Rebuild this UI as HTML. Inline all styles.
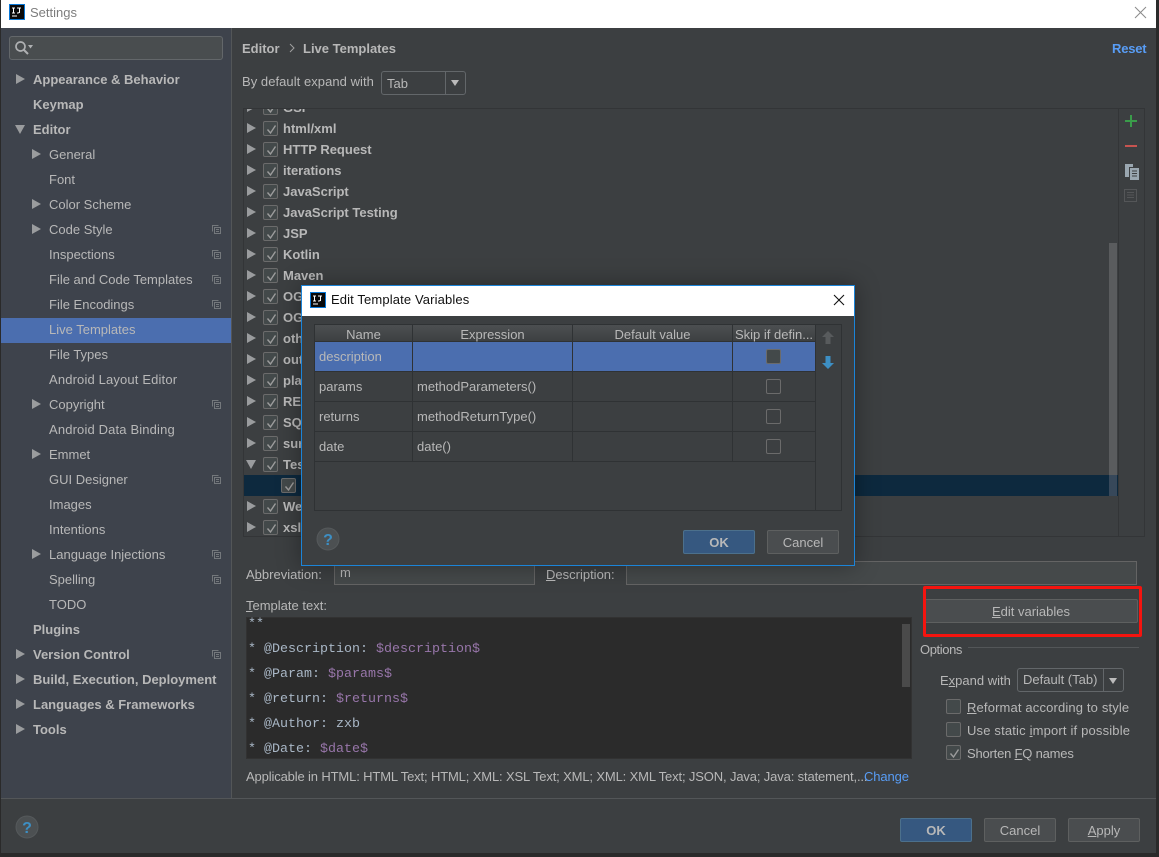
<!DOCTYPE html>
<html><head><meta charset="utf-8"><title>Settings</title>
<style>
html,body{margin:0;padding:0;background:#2b2b2b;}
#w{position:relative;width:1159px;height:857px;overflow:hidden;background:#2a2a2a;font-family:"Liberation Sans","Noto Sans CJK SC",sans-serif;font-size:13px;color:#b8b8b8;}
.a{position:absolute;box-sizing:border-box;}
.t{position:absolute;white-space:nowrap;line-height:22px;height:22px;}
.b{font-weight:bold;}
.btn{position:absolute;box-sizing:border-box;height:24px;border:1px solid #5e6060;border-radius:2px;background:#4a4d4f;text-align:center;line-height:24px;color:#b8b8b8;}
.ok{background:#365880;border-color:#4c708c;font-weight:bold;color:#b8b8b8;}
.cb{position:absolute;box-sizing:border-box;width:15px;height:15px;border:1px solid #6b6b6b;border-radius:2px;background:#43494a;}
.cb svg{position:absolute;left:1px;top:1px;}
.ar{position:absolute;width:0;height:0;border-left:9px solid #9a9c9e;border-top:5px solid transparent;border-bottom:5px solid transparent;}
.dn{position:absolute;width:0;height:0;border-top:9px solid #9a9c9e;border-left:5px solid transparent;border-right:5px solid transparent;}
.cp{position:absolute;left:212px;}
.tree{font-weight:bold;color:#b8b8b8;}
.ln{position:absolute;left:248px;font-family:"Liberation Mono",monospace;font-size:13.33px;line-height:20px;white-space:pre;color:#a9b7c6;}
.ln i{font-style:normal;color:#9876aa;}
.c{position:absolute;background:#2f3234;}
.cell{position:absolute;white-space:nowrap;line-height:20px;}
</style></head><body>
<div id="w">
<svg width="0" height="0" style="position:absolute"><defs>
<symbol id="chk" viewBox="0 0 13 13"><path d="M2.5 6.5 L5.5 10 L10.5 2.5" fill="none" stroke="#9c9c9c" stroke-width="1.4"/></symbol>
<symbol id="cpy" viewBox="0 0 9 9"><path d="M.5 6.5V.5H6.5M2.5 2.5H8.5V8.5H2.5ZM4 4.5H7M4 6.5H7" fill="none" stroke="#74787c" stroke-width="1"/></symbol>
</defs></svg>

<!-- window -->
<div class="a" style="left:1px;top:0;width:1155px;height:853px;background:#3c3f41;"></div>
<div class="a" style="left:1px;top:0;width:1155px;height:28px;background:#fff;"></div>
<svg class="a" style="left:9px;top:4px" width="16" height="16"><rect width="16" height="16" fill="#0a78d7"/><rect x="1" y="1" width="14" height="14" fill="#0a0a0a"/><path d="M3 4H6M4.500 4V9M3 9H6M8 4H12M10.500 4V8.500L9 9H8M3 12H8" stroke="#fff" stroke-width="1" fill="none"/></svg>
<div class="t" style="left:30px;top:2px;color:#7d7d7d;font-size:13px;">Settings</div>
<svg class="a" style="left:1134px;top:6px" width="13" height="13"><path d="M1 1L12 12M12 1L1 12" stroke="#8b8b8b" stroke-width="1"/></svg>

<!-- sidebar -->
<div class="a" style="left:1px;top:28px;width:230px;height:770px;background:#3e434c;"></div>
<div class="a" style="left:231px;top:28px;width:1px;height:770px;background:#535658;"></div>
<div class="a" style="left:9px;top:36px;width:214px;height:24px;background:#494d4f;border:1px solid #63676a;border-radius:3px;"></div>
<svg class="a" style="left:15px;top:41px" width="20" height="14"><circle cx="5.500" cy="5.500" r="4.500" fill="none" stroke="#aeb0b2" stroke-width="1.700"/><path d="M8.500 8.500L13 13" stroke="#aeb0b2" stroke-width="2"/><path d="M13 4H18L15.500 7.500Z" fill="#aeb0b2"/></svg>
<div class="a" style="left:1px;top:318px;width:230px;height:25px;background:#4b6eaf;"></div>

<div class="ar" style="left:16px;top:74px"></div>
<div class="dn" style="left:15px;top:125px"></div>
<div class="ar" style="left:32px;top:149px"></div>
<div class="ar" style="left:32px;top:199px"></div>
<div class="ar" style="left:32px;top:224px"></div>
<div class="ar" style="left:32px;top:399px"></div>
<div class="ar" style="left:32px;top:449px"></div>
<div class="ar" style="left:32px;top:549px"></div>
<div class="ar" style="left:16px;top:649px"></div>
<div class="ar" style="left:16px;top:674px"></div>
<div class="ar" style="left:16px;top:699px"></div>
<div class="ar" style="left:16px;top:724px"></div>

<div class="t b" style="left:33px;top:69px">Appearance &amp; Behavior</div>
<div class="t b" style="left:33px;top:94px">Keymap</div>
<div class="t b" style="left:33px;top:119px">Editor</div>
<div class="t" style="left:49px;top:144px">General</div>
<div class="t" style="left:49px;top:169px">Font</div>
<div class="t" style="left:49px;top:194px">Color Scheme</div>
<div class="t" style="left:49px;top:219px">Code Style</div>
<div class="t" style="left:49px;top:244px">Inspections</div>
<div class="t" style="left:49px;top:269px">File and Code Templates</div>
<div class="t" style="left:49px;top:294px">File Encodings</div>
<div class="t" style="left:49px;top:319px">Live Templates</div>
<div class="t" style="left:49px;top:344px">File Types</div>
<div class="t" style="left:49px;top:369px;letter-spacing:.15px">Android Layout Editor</div>
<div class="t" style="left:49px;top:394px">Copyright</div>
<div class="t" style="left:49px;top:419px;letter-spacing:.15px">Android Data Binding</div>
<div class="t" style="left:49px;top:444px">Emmet</div>
<div class="t" style="left:49px;top:469px">GUI Designer</div>
<div class="t" style="left:49px;top:494px">Images</div>
<div class="t" style="left:49px;top:519px">Intentions</div>
<div class="t" style="left:49px;top:544px">Language Injections</div>
<div class="t" style="left:49px;top:569px">Spelling</div>
<div class="t" style="left:49px;top:594px">TODO</div>
<div class="t b" style="left:33px;top:619px">Plugins</div>
<div class="t b" style="left:33px;top:644px">Version Control</div>
<div class="t b" style="left:33px;top:669px">Build, Execution, Deployment</div>
<div class="t b" style="left:33px;top:694px">Languages &amp; Frameworks</div>
<div class="t b" style="left:33px;top:719px">Tools</div>

<svg class="cp" style="top:225px" width="9" height="9"><use href="#cpy"/></svg>
<svg class="cp" style="top:250px" width="9" height="9"><use href="#cpy"/></svg>
<svg class="cp" style="top:275px" width="9" height="9"><use href="#cpy"/></svg>
<svg class="cp" style="top:300px" width="9" height="9"><use href="#cpy"/></svg>
<svg class="cp" style="top:400px" width="9" height="9"><use href="#cpy"/></svg>
<svg class="cp" style="top:475px" width="9" height="9"><use href="#cpy"/></svg>
<svg class="cp" style="top:550px" width="9" height="9"><use href="#cpy"/></svg>
<svg class="cp" style="top:575px" width="9" height="9"><use href="#cpy"/></svg>
<svg class="cp" style="top:650px" width="9" height="9"><use href="#cpy"/></svg>

<!-- header -->
<div class="t b" style="left:242px;top:38px">Editor</div>
<svg class="a" style="left:289px;top:43px" width="6" height="10"><path d="M1 1L5 5L1 9" fill="none" stroke="#a0a0a0"/></svg>
<div class="t b" style="left:303px;top:38px">Live Templates</div>
<div class="t b" style="left:1112px;top:38px;color:#589df6;letter-spacing:-.2px">Reset</div>
<div class="t" style="left:242px;top:71px;letter-spacing:.05px">By default expand with</div>
<div class="a" style="left:381px;top:71px;width:85px;height:24px;border:1px solid #63676a;border-radius:3px;"></div>
<div class="a" style="left:445px;top:72px;width:1px;height:22px;background:#63676a;"></div>
<div class="t" style="left:387px;top:73px">Tab</div>
<div class="a" style="left:451px;top:80px;width:0;height:0;border-top:6px solid #bbb;border-left:4px solid transparent;border-right:4px solid transparent;"></div>

<!-- tree -->
<div class="a" style="left:243px;top:108px;width:902px;height:429px;border:1px solid #333537;"></div>
<div class="a" style="left:1118px;top:108px;width:1px;height:428px;background:#333537;"></div>
<div class="a" style="left:244px;top:475px;width:874px;height:21px;background:#0d293e;"></div>
<div class="a" style="left:1109px;top:243px;width:8px;height:232px;background:#5a5c5e;"></div>
<div class="a" style="left:1109px;top:475px;width:8px;height:21px;background:#37485a;"></div>

<div class="a" style="left:244px;top:109px;width:870px;height:427px;overflow:hidden;">
<div class="ar" style="left:3px;top:-7px"></div><div class="cb" style="left:19px;top:-9px"><svg width="13" height="13"><use href="#chk"/></svg></div><div class="t tree" style="left:39px;top:-12px">GSP</div>
<div class="ar" style="left:3px;top:14px"></div><div class="cb" style="left:19px;top:12px"><svg width="13" height="13"><use href="#chk"/></svg></div><div class="t tree" style="left:39px;top:9px">html/xml</div>
<div class="ar" style="left:3px;top:35px"></div><div class="cb" style="left:19px;top:33px"><svg width="13" height="13"><use href="#chk"/></svg></div><div class="t tree" style="left:39px;top:30px">HTTP Request</div>
<div class="ar" style="left:3px;top:56px"></div><div class="cb" style="left:19px;top:54px"><svg width="13" height="13"><use href="#chk"/></svg></div><div class="t tree" style="left:39px;top:51px">iterations</div>
<div class="ar" style="left:3px;top:77px"></div><div class="cb" style="left:19px;top:75px"><svg width="13" height="13"><use href="#chk"/></svg></div><div class="t tree" style="left:39px;top:72px">JavaScript</div>
<div class="ar" style="left:3px;top:98px"></div><div class="cb" style="left:19px;top:96px"><svg width="13" height="13"><use href="#chk"/></svg></div><div class="t tree" style="left:39px;top:93px">JavaScript Testing</div>
<div class="ar" style="left:3px;top:119px"></div><div class="cb" style="left:19px;top:117px"><svg width="13" height="13"><use href="#chk"/></svg></div><div class="t tree" style="left:39px;top:114px">JSP</div>
<div class="ar" style="left:3px;top:140px"></div><div class="cb" style="left:19px;top:138px"><svg width="13" height="13"><use href="#chk"/></svg></div><div class="t tree" style="left:39px;top:135px">Kotlin</div>
<div class="ar" style="left:3px;top:161px"></div><div class="cb" style="left:19px;top:159px"><svg width="13" height="13"><use href="#chk"/></svg></div><div class="t tree" style="left:39px;top:156px">Maven</div>
<div class="ar" style="left:3px;top:182px"></div><div class="cb" style="left:19px;top:180px"><svg width="13" height="13"><use href="#chk"/></svg></div><div class="t tree" style="left:39px;top:177px">OGNL</div>
<div class="ar" style="left:3px;top:203px"></div><div class="cb" style="left:19px;top:201px"><svg width="13" height="13"><use href="#chk"/></svg></div><div class="t tree" style="left:39px;top:198px">OGNL</div>
<div class="ar" style="left:3px;top:224px"></div><div class="cb" style="left:19px;top:222px"><svg width="13" height="13"><use href="#chk"/></svg></div><div class="t tree" style="left:39px;top:219px">other</div>
<div class="ar" style="left:3px;top:245px"></div><div class="cb" style="left:19px;top:243px"><svg width="13" height="13"><use href="#chk"/></svg></div><div class="t tree" style="left:39px;top:240px">output</div>
<div class="ar" style="left:3px;top:266px"></div><div class="cb" style="left:19px;top:264px"><svg width="13" height="13"><use href="#chk"/></svg></div><div class="t tree" style="left:39px;top:261px">plain</div>
<div class="ar" style="left:3px;top:287px"></div><div class="cb" style="left:19px;top:285px"><svg width="13" height="13"><use href="#chk"/></svg></div><div class="t tree" style="left:39px;top:282px">REST</div>
<div class="ar" style="left:3px;top:308px"></div><div class="cb" style="left:19px;top:306px"><svg width="13" height="13"><use href="#chk"/></svg></div><div class="t tree" style="left:39px;top:303px">SQL</div>
<div class="ar" style="left:3px;top:329px"></div><div class="cb" style="left:19px;top:327px"><svg width="13" height="13"><use href="#chk"/></svg></div><div class="t tree" style="left:39px;top:324px">surround</div>
<div class="dn" style="left:2px;top:351px"></div><div class="cb" style="left:19px;top:348px"><svg width="13" height="13"><use href="#chk"/></svg></div><div class="t tree" style="left:39px;top:345px">Test</div>
<div class="cb" style="left:37px;top:369px"><svg width="13" height="13"><use href="#chk"/></svg></div>
<div class="ar" style="left:3px;top:392px"></div><div class="cb" style="left:19px;top:390px"><svg width="13" height="13"><use href="#chk"/></svg></div><div class="t tree" style="left:39px;top:387px">Web</div>
<div class="ar" style="left:3px;top:413px"></div><div class="cb" style="left:19px;top:411px"><svg width="13" height="13"><use href="#chk"/></svg></div><div class="t tree" style="left:39px;top:408px">xsl</div>
</div>

<svg class="a" style="left:1124px;top:114px" width="14" height="14"><path d="M7 1V13M1 7H13" stroke="#3a9c4a" stroke-width="2"/></svg>
<div class="a" style="left:1125px;top:145px;width:12px;height:2px;background:#c75450;"></div>
<svg class="a" style="left:1124px;top:163px" width="16" height="18"><path d="M1 1H9V4H5V14H1Z" fill="#9aa7b0"/><rect x="6" y="5" width="9" height="12" fill="#9aa7b0"/><path d="M8 8H13M8 10.500H13M8 13H13" stroke="#3c3f41"/></svg>
<svg class="a" style="left:1124px;top:189px" width="14" height="15"><rect x=".5" y=".5" width="12" height="12" fill="none" stroke="#545658"/><path d="M3 3.500H10M3 6H10M3 8.500H10" stroke="#545658"/></svg>

<!-- abbreviation -->
<div class="t" style="left:246px;top:564px">A<u>b</u>breviation:</div>
<div class="a" style="left:334px;top:558px;width:201px;height:27px;background:#45494a;border:1px solid #646464;border-top:0;"></div>
<div class="t" style="left:340px;top:562px">m</div>
<div class="t" style="left:546px;top:564px"><u>D</u>escription:</div>
<div class="a" style="left:626px;top:561px;width:511px;height:24px;background:#45494a;border:1px solid #646464;"></div>
<div class="t" style="left:246px;top:595px"><u>T</u>emplate text:</div>

<!-- editor -->
<div class="a" style="left:246px;top:617px;width:666px;height:142px;background:#2b2b2b;border:1px solid #323232;"></div>
<div class="a" style="left:902px;top:624px;width:8px;height:63px;background:#4a4a4a;"></div>
<div class="ln" style="top:615px">**</div>
<div class="ln" style="top:640px">* @Description: <i>$description$</i></div>
<div class="ln" style="top:665px">* @Param: <i>$params$</i></div>
<div class="ln" style="top:690px">* @return: <i>$returns$</i></div>
<div class="ln" style="top:715px">* @Author: zxb</div>
<div class="ln" style="top:740px">* @Date: <i>$date$</i></div>
<div class="t" style="left:246px;top:766px;letter-spacing:-.14px">Applicable in HTML: HTML Text; HTML; XML: XSL Text; XML; XML: XML Text; JSON, Java; Java: statement,...</div>
<div class="t" style="left:864px;top:766px;color:#589df6;letter-spacing:-.1px">Change</div>

<!-- edit variables -->
<div class="btn" style="left:924px;top:599px;width:214px;"><u>E</u>dit variables</div>
<div class="a" style="left:923px;top:586px;width:219px;height:51px;border:3px solid #f5140f;border-radius:2px;"></div>

<!-- options -->
<div class="t" style="left:920px;top:639px;letter-spacing:-.4px">Options</div>
<div class="a" style="left:968px;top:647px;width:171px;height:1px;background:#535658;"></div>
<div class="t" style="left:940px;top:670px">E<u>x</u>pand with</div>
<div class="a" style="left:1017px;top:668px;width:107px;height:24px;border:1px solid #63676a;border-radius:3px;"></div>
<div class="a" style="left:1103px;top:669px;width:1px;height:22px;background:#63676a;"></div>
<div class="t" style="left:1023px;top:669px">Default (Tab)</div>
<div class="a" style="left:1109px;top:678px;width:0;height:0;border-top:6px solid #bbb;border-left:4px solid transparent;border-right:4px solid transparent;"></div>
<div class="cb" style="left:946px;top:699px"></div>
<div class="t" style="left:967px;top:697px;letter-spacing:.15px"><u>R</u>eformat according to style</div>
<div class="cb" style="left:946px;top:722px"></div>
<div class="t" style="left:967px;top:720px;letter-spacing:.17px">Use static <u>i</u>mport if possible</div>
<div class="cb" style="left:946px;top:745px"><svg width="13" height="13"><use href="#chk"/></svg></div>
<div class="t" style="left:967px;top:743px;letter-spacing:-.2px">Shorten <u>F</u>Q names</div>

<!-- bottom -->
<div class="a" style="left:1px;top:798px;width:1155px;height:1px;background:#535658;"></div>
<svg class="a" style="left:15px;top:815px" width="24" height="24"><circle cx="12" cy="12" r="11" fill="#4c5052" stroke="#55595b"/><text x="12" y="18" text-anchor="middle" font-family="Liberation Sans" font-weight="bold" font-size="16" fill="#3d8fc4">?</text></svg>
<div class="btn ok" style="left:900px;top:818px;width:72px;">OK</div>
<div class="btn" style="left:984px;top:818px;width:72px;">Cancel</div>
<div class="btn" style="left:1068px;top:818px;width:72px;"><u>A</u>pply</div>

<!-- dialog -->
<div class="a" style="left:301px;top:285px;width:554px;height:281px;background:#3c3f41;border:1px solid #1b84d8;box-shadow:0 0 22px rgba(0,0,0,.35);"></div>
<div class="a" style="left:302px;top:286px;width:552px;height:30px;background:#fff;"></div>
<svg class="a" style="left:310px;top:292px" width="16" height="16"><rect width="16" height="16" fill="#0a78d7"/><rect x="1" y="1" width="14" height="14" fill="#0a0a0a"/><path d="M3 4H6M4.500 4V9M3 9H6M8 4H12M10.500 4V8.500L9 9H8M3 12H8" stroke="#fff" stroke-width="1" fill="none"/></svg>
<div class="t" style="left:331px;top:289px;color:#111;letter-spacing:.13px">Edit Template Variables</div>
<svg class="a" style="left:833px;top:294px" width="12" height="12"><path d="M1 1L11 11M11 1L1 11" stroke="#111" stroke-width="1.100"/></svg>

<div class="a" style="left:314px;top:324px;width:528px;height:187px;border:1px solid #2f3234;"></div>
<div class="a" style="left:815px;top:324px;width:1px;height:187px;background:#2f3234;"></div>
<div class="a" style="left:315px;top:325px;width:500px;height:17px;background:linear-gradient(#4c4f51,#3c3f41);"></div>
<div class="a" style="left:315px;top:342px;width:500px;height:29px;background:#4b6eaf;"></div>
<div class="c" style="left:315px;top:341px;width:500px;height:1px;"></div>
<div class="c" style="left:315px;top:371px;width:500px;height:1px;"></div>
<div class="c" style="left:315px;top:401px;width:500px;height:1px;"></div>
<div class="c" style="left:315px;top:431px;width:500px;height:1px;"></div>
<div class="c" style="left:315px;top:461px;width:500px;height:1px;"></div>
<div class="c" style="left:412px;top:325px;width:1px;height:137px;"></div>
<div class="c" style="left:572px;top:325px;width:1px;height:137px;"></div>
<div class="c" style="left:732px;top:325px;width:1px;height:137px;"></div>
<div class="cell" style="left:315px;width:97px;top:325px;text-align:center">Name</div>
<div class="cell" style="left:413px;width:159px;top:325px;text-align:center">Expression</div>
<div class="cell" style="left:573px;width:159px;top:325px;text-align:center">Default value</div>
<div class="cell" style="left:735px;width:80px;top:325px;overflow:hidden">Skip if defin...</div>
<div class="cell" style="left:319px;top:347px">description</div>
<div class="cell" style="left:319px;top:377px">params</div>
<div class="cell" style="left:417px;top:377px">methodParameters()</div>
<div class="cell" style="left:319px;top:407px">returns</div>
<div class="cell" style="left:417px;top:407px">methodReturnType()</div>
<div class="cell" style="left:319px;top:437px">date</div>
<div class="cell" style="left:417px;top:437px">date()</div>
<div class="cb" style="left:766px;top:349px;background:#43494a"></div>
<div class="cb" style="left:766px;top:379px;background:#3c3f41"></div>
<div class="cb" style="left:766px;top:409px;background:#3c3f41"></div>
<div class="cb" style="left:766px;top:439px;background:#3c3f41"></div>
<svg class="a" style="left:822px;top:331px" width="12" height="13"><path d="M6 0L12 6H8.500V13H3.500V6H0Z" fill="#585b5d"/></svg>
<svg class="a" style="left:822px;top:356px" width="12" height="13"><path d="M6 13L12 7H8.500V0H3.500V7H0Z" fill="#3d8fc4"/></svg>
<svg class="a" style="left:316px;top:527px" width="24" height="24"><circle cx="12" cy="12" r="11" fill="#4c5052" stroke="#55595b"/><text x="12" y="18" text-anchor="middle" font-family="Liberation Sans" font-weight="bold" font-size="16" fill="#3d8fc4">?</text></svg>
<div class="btn ok" style="left:683px;top:530px;width:72px;">OK</div>
<div class="btn" style="left:767px;top:530px;width:72px;">Cancel</div>
</div>
</body></html>
